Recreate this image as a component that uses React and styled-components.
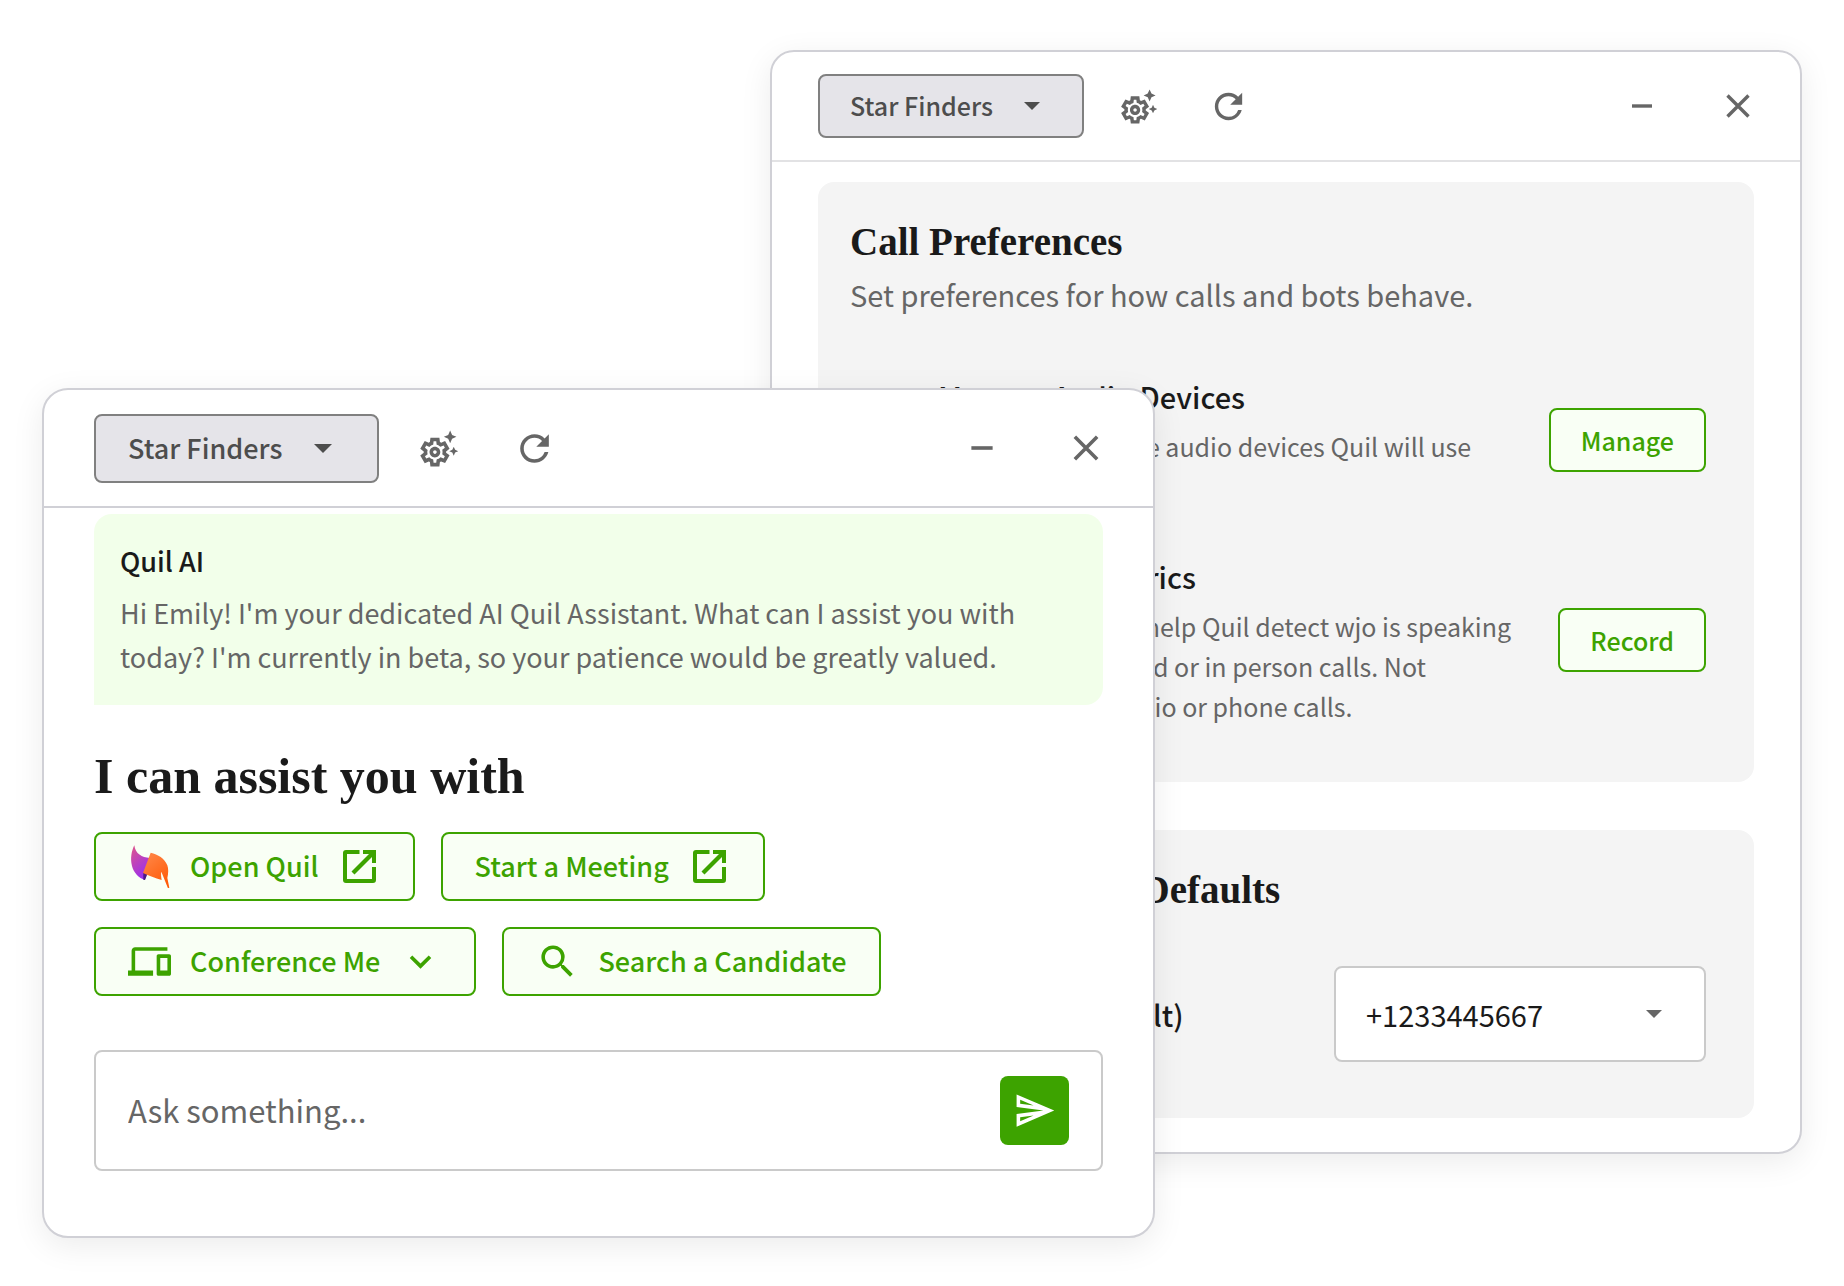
import React from "react";
import styled, { createGlobalStyle, ThemeProvider } from "styled-components";
import {
  MdDevices,
  MdKeyboardArrowDown,
  MdMic,
  MdOutlineSend,
  MdOutlineSettingsSuggest,
  MdRecordVoiceOver,
  MdRefresh,
  MdSearch,
} from "react-icons/md";

const sans = `"Noto Sans CJK SC", "Open Sans", sans-serif`;
const serif = `"Liberation Serif", "Times New Roman", serif`;

const color = {
  ink: "#1a1a1a",
  text: "#666666",
  strong: "#4d4d4d",
  green: "#3da300",
  greenTint: "#f9fff5",
  greenSoft: "#f2ffea",
  card: "#f4f4f4",
  line: "#d0d0d6",
  field: "#cacaca",
};

/* Two densities: the settings window is regular, the assistant is large. */
const regular = {
  radius: 24,
  gutter: 46,
  headerHeight: 108,
  headerLine: "#e2e2e4",
  control: 64,
  selectWidth: 266,
  pad: 30,
  label: 25,
  icon: 41,
  iconGap: 49,
  iconStart: 34,
  windowIcon: 32,
  windowGap: 64,
  caret: 16,
  caretEnd: 44,
};

const large = {
  radius: 26,
  gutter: 50,
  headerHeight: 116,
  headerLine: color.line,
  control: 69,
  selectWidth: 285,
  pad: 32,
  label: 27,
  icon: 43,
  iconGap: 53,
  iconStart: 38,
  windowIcon: 34,
  windowGap: 70,
  caret: 18,
  caretEnd: 47,
};

const GlobalStyle = createGlobalStyle`
  *, *::before, *::after { box-sizing: border-box; }
  body { margin: 0; background: #fff; color: ${color.ink}; font-family: ${sans}; }
  button, input, select { font: inherit; color: inherit; margin: 0; }
  h1, h2, h3, p { margin: 0; }
`;

const Desktop = styled.main`
  display: grid;
  grid-template-columns: minmax(0, 1fr);
  align-items: start;
  padding: 50px 42px 48px;
`;

const Window = styled.section`
  grid-area: 1 / 1;
  width: 100%;
  background: #fff;
  border: 2px solid ${color.line};
  border-radius: ${({ theme }) => theme.radius}px;
  box-shadow: 0 8px 32px rgba(0, 0, 0, 0.08);
`;

const SettingsWindow = styled(Window)`
  justify-self: end;
  max-width: 1032px;
`;

const AssistantWindow = styled(Window)`
  justify-self: start;
  max-width: 1113px;
  margin-top: 338px;
`;

const TitleBar = styled.header`
  display: flex;
  align-items: center;
  height: ${({ theme }) => theme.headerHeight + 2}px;
  padding: 0 ${({ theme }) => theme.gutter}px;
  border-bottom: 2px solid ${({ theme }) => theme.headerLine};
`;

const Tools = styled.div`
  display: flex;
  gap: ${({ theme }) => theme.iconGap}px;
  margin-left: ${({ theme }) => theme.iconStart}px;
`;

const WindowControls = styled.div`
  display: flex;
  gap: ${({ theme }) => theme.windowGap}px;
  margin-left: auto;
`;

const IconButton = styled.button`
  display: flex;
  padding: 0;
  border: 0;
  background: none;
  color: ${color.text};
  cursor: pointer;
`;

const SelectBox = styled.div`
  display: grid;
  align-items: center;
  width: ${({ $width }) => $width}px;

  > * {
    grid-area: 1 / 1;
  }
`;

const Caret = styled.svg`
  justify-self: end;
  width: ${({ theme }) => theme.caret}px;
  margin-right: ${({ theme }) => theme.caretEnd}px;
  pointer-events: none;
`;

const TeamSelect = styled.select`
  appearance: none;
  width: 100%;
  height: ${({ theme }) => theme.control}px;
  padding: 0 ${({ theme }) => theme.pad}px 2px;
  border: 2px solid #808080;
  border-radius: 8px;
  background: #e5e4e9;
  color: ${color.strong};
  font-size: ${({ theme }) => theme.label}px;
  font-weight: 500;
`;

const PhoneSelect = styled.select`
  appearance: none;
  width: 100%;
  height: 96px;
  padding: 0 30px;
  border: 2px solid ${color.field};
  border-radius: 8px;
  background: #fff;
  font-size: 29px;
`;

const ActionButton = styled.button`
  display: flex;
  align-items: center;
  flex: none;
  gap: 19px;
  height: ${({ theme }) => theme.control}px;
  padding: 0 ${({ theme }) => theme.pad}px;
  border: 2px solid ${color.green};
  border-radius: 8px;
  background: ${color.greenTint};
  color: ${color.green};
  font-size: ${({ theme }) => theme.label}px;
  font-weight: 500;
  white-space: nowrap;
  cursor: pointer;
`;

const ActionLabel = styled.span`
  padding-bottom: 2px;
`;

/* Settings window */

const SettingsBody = styled.div`
  display: grid;
  gap: 48px;
  padding: 20px 46px 34px;
`;

const Card = styled.section`
  padding: 32px 48px 56px 32px;
  border-radius: 16px;
  background: ${color.card};
`;

const CardTitle = styled.h2`
  font: bold 39px/56px ${serif};
`;

const CardIntro = styled.p`
  color: ${color.text};
  font-size: 29px;
  line-height: 48px;
`;

const Preferences = styled.div`
  display: grid;
  gap: 48px;
  margin-top: 56px;
`;

const Preference = styled.div`
  display: flex;
  align-items: center;
  gap: 32px;
  color: ${color.text};
`;

const PreferenceText = styled.div`
  flex: 1;
`;

const PreferenceTitle = styled.h3`
  color: ${color.ink};
  font-size: 29px;
  font-weight: 500;
  line-height: 44px;
`;

const PreferenceNote = styled.p`
  margin-top: 8px;
  font-size: 25px;
  line-height: 40px;
`;

const Field = styled.div`
  display: flex;
  align-items: center;
  justify-content: space-between;
  margin-top: 48px;
`;

const FieldLabel = styled.label`
  font-size: 29px;
  font-weight: 500;
`;

/* Assistant window */

const AssistantBody = styled.div`
  padding: 6px 50px 65px;
`;

const Message = styled.article`
  padding: 25px 26px 26px;
  border-radius: 18px 18px 18px 0;
  background: ${color.greenSoft};
`;

const Sender = styled.h2`
  font-size: 27px;
  font-weight: 500;
  line-height: 44px;
`;

const MessageText = styled.p`
  margin-top: 8px;
  color: ${color.text};
  font-size: 27px;
  line-height: 44px;
`;

const Heading = styled.h1`
  margin: 41px 0 26px;
  font: bold 50px/60px ${serif};
`;

const Actions = styled.div`
  display: grid;
  gap: 26px;
`;

const ActionRow = styled.div`
  display: flex;
  flex-wrap: wrap;
  gap: 26px;
`;

const Composer = styled.form`
  display: flex;
  align-items: center;
  height: 121px;
  margin-top: 54px;
  padding: 0 32px;
  border: 2px solid ${color.field};
  border-radius: 8px;
`;

const Prompt = styled.input`
  flex: 1;
  min-width: 0;
  padding: 0 0 2px;
  border: 0;
  outline: 0;
  background: none;
  font-size: 31px;

  &::placeholder {
    color: ${color.text};
    opacity: 1;
  }
`;

const SendButton = styled.button`
  display: grid;
  place-items: center;
  width: 69px;
  height: 69px;
  padding: 0;
  border: 0;
  border-radius: 8px;
  background: ${color.green};
  color: #fff;
  cursor: pointer;
`;

function Minimize({ size }) {
  return (
    <svg width={size} height={size} viewBox="0 0 32 32">
      <path d="M6 14.300h20v3.400H6z" fill="currentColor" />
    </svg>
  );
}

function Close({ size }) {
  return (
    <svg width={size} height={size} viewBox="0 0 32 32">
      <path d="M5.500 5.500l21 21M26.500 5.500l-21 21" stroke="currentColor" strokeWidth="3.400" />
    </svg>
  );
}

function OpenExternal() {
  return (
    <svg width="43" height="43" viewBox="0 0 43 43" fill="currentColor">
      <path d="M21.500 5H8a3 3 0 0 0-3 3v27a3 3 0 0 0 3 3h27a3 3 0 0 0 3-3V22h-4v12H9V9h12.500z" />
      <path d="M25 5h13v13h-4v-6L16.500 29.500l-3-3L31 9h-6z" />
    </svg>
  );
}

function QuilLogo() {
  return (
    <svg width="43" height="43" viewBox="24 45 129 129">
      <defs>
        <linearGradient id="plume" x1="0" y1="0" x2="0.5" y2="1">
          <stop offset="0" stopColor="#e0558a" />
          <stop offset="1" stopColor="#9b30ec" />
        </linearGradient>
        <linearGradient id="ember" x1="0" y1="0" x2="0.6" y2="1">
          <stop offset="0" stopColor="#ff8a4c" />
          <stop offset="1" stopColor="#ff5c0a" />
        </linearGradient>
      </defs>
      <path d="M43 46C35 62 30 85 36 108c5 20 20 36 39 42l14-66C66 82 46 72 43 46z" fill="url(#plume)" />
      <path d="M70 127l12 6-7 17-5-1z" fill="#4b1a86" />
      <path
        d="M92 68c22 5 42 17 50 38 4 12 3 24 0 38l6 29-4 2-20-50c-2 8 0 18 1 25-20-5-38-13-56-21z"
        fill="url(#ember)"
      />
    </svg>
  );
}

function Picker({ id, label, value, width, caretColor = color.strong, as: Control }) {
  return (
    <SelectBox $width={width}>
      <Control id={id} aria-label={label} defaultValue={value}>
        <option>{value}</option>
      </Control>
      <Caret viewBox="0 0 16 8">
        <path d="M0 0h16L8 8z" fill={caretColor} />
      </Caret>
    </SelectBox>
  );
}

function Header({ theme }) {
  return (
    <TitleBar>
      <Picker as={TeamSelect} label="Team" value="Star Finders" width={theme.selectWidth} />
      <Tools>
        <IconButton aria-label="Smart settings">
          <MdOutlineSettingsSuggest size={theme.icon} />
        </IconButton>
        <IconButton aria-label="Refresh">
          <MdRefresh size={theme.icon} />
        </IconButton>
      </Tools>
      <WindowControls>
        <IconButton aria-label="Minimize">
          <Minimize size={theme.windowIcon} />
        </IconButton>
        <IconButton aria-label="Close">
          <Close size={theme.windowIcon} />
        </IconButton>
      </WindowControls>
    </TitleBar>
  );
}

function Settings() {
  return (
    <ThemeProvider theme={regular}>
      <SettingsWindow>
        <Header theme={regular} />
        <SettingsBody>
          <Card>
            <CardTitle>Call Preferences</CardTitle>
            <CardIntro>Set preferences for how calls and bots behave.</CardIntro>
            <Preferences>
              <Preference>
                <MdMic size={56} />
                <PreferenceText>
                  <PreferenceTitle>Manage Audio Devices</PreferenceTitle>
                  <PreferenceNote>
                    Select and manage audio devices Quil will use
                    <br />
                    for calls
                  </PreferenceNote>
                </PreferenceText>
                <ActionButton>Manage</ActionButton>
              </Preference>
              <Preference>
                <MdRecordVoiceOver size={56} />
                <PreferenceText>
                  <PreferenceTitle>Speech Biometrics</PreferenceTitle>
                  <PreferenceNote>
                    Add your voice to help Quil detect wjo is speaking
                    <br />
                    during local, shared or in person calls. Not
                    <br />
                    applied to any audio or phone calls.
                  </PreferenceNote>
                </PreferenceText>
                <ActionButton>Record</ActionButton>
              </Preference>
            </Preferences>
          </Card>
          <Card>
            <CardTitle>Phone and Video Defaults</CardTitle>
            <Field>
              <FieldLabel htmlFor="phone">Phone number (Default)</FieldLabel>
              <Picker
                as={PhoneSelect}
                id="phone"
                value="+1233445667"
                width={372}
                caretColor={color.text}
              />
            </Field>
          </Card>
        </SettingsBody>
      </SettingsWindow>
    </ThemeProvider>
  );
}

function Assistant() {
  return (
    <ThemeProvider theme={large}>
      <AssistantWindow>
        <Header theme={large} />
        <AssistantBody>
          <Message>
            <Sender>Quil AI</Sender>
            <MessageText>
              Hi Emily! I'm your dedicated AI Quil Assistant. What can I assist you with today? I'm
              currently in beta, so your patience would be greatly valued.
            </MessageText>
          </Message>
          <Heading>I can assist you with</Heading>
          <Actions>
            <ActionRow>
              <ActionButton>
                <QuilLogo />
                <ActionLabel>Open Quil</ActionLabel>
                <OpenExternal />
              </ActionButton>
              <ActionButton>
                <ActionLabel>Start a Meeting</ActionLabel>
                <OpenExternal />
              </ActionButton>
            </ActionRow>
            <ActionRow>
              <ActionButton>
                <MdDevices size={43} />
                <ActionLabel>Conference Me</ActionLabel>
                <MdKeyboardArrowDown size={43} />
              </ActionButton>
              <ActionButton>
                <MdSearch size={43} />
                <ActionLabel>Search a Candidate</ActionLabel>
              </ActionButton>
            </ActionRow>
          </Actions>
          <Composer onSubmit={(event) => event.preventDefault()}>
            <Prompt aria-label="Ask something" placeholder="Ask something..." />
            <SendButton aria-label="Send">
              <MdOutlineSend size={43} />
            </SendButton>
          </Composer>
        </AssistantBody>
      </AssistantWindow>
    </ThemeProvider>
  );
}

export default function App() {
  return (
    <>
      <GlobalStyle />
      <Desktop>
        <Settings />
        <Assistant />
      </Desktop>
    </>
  );
}
